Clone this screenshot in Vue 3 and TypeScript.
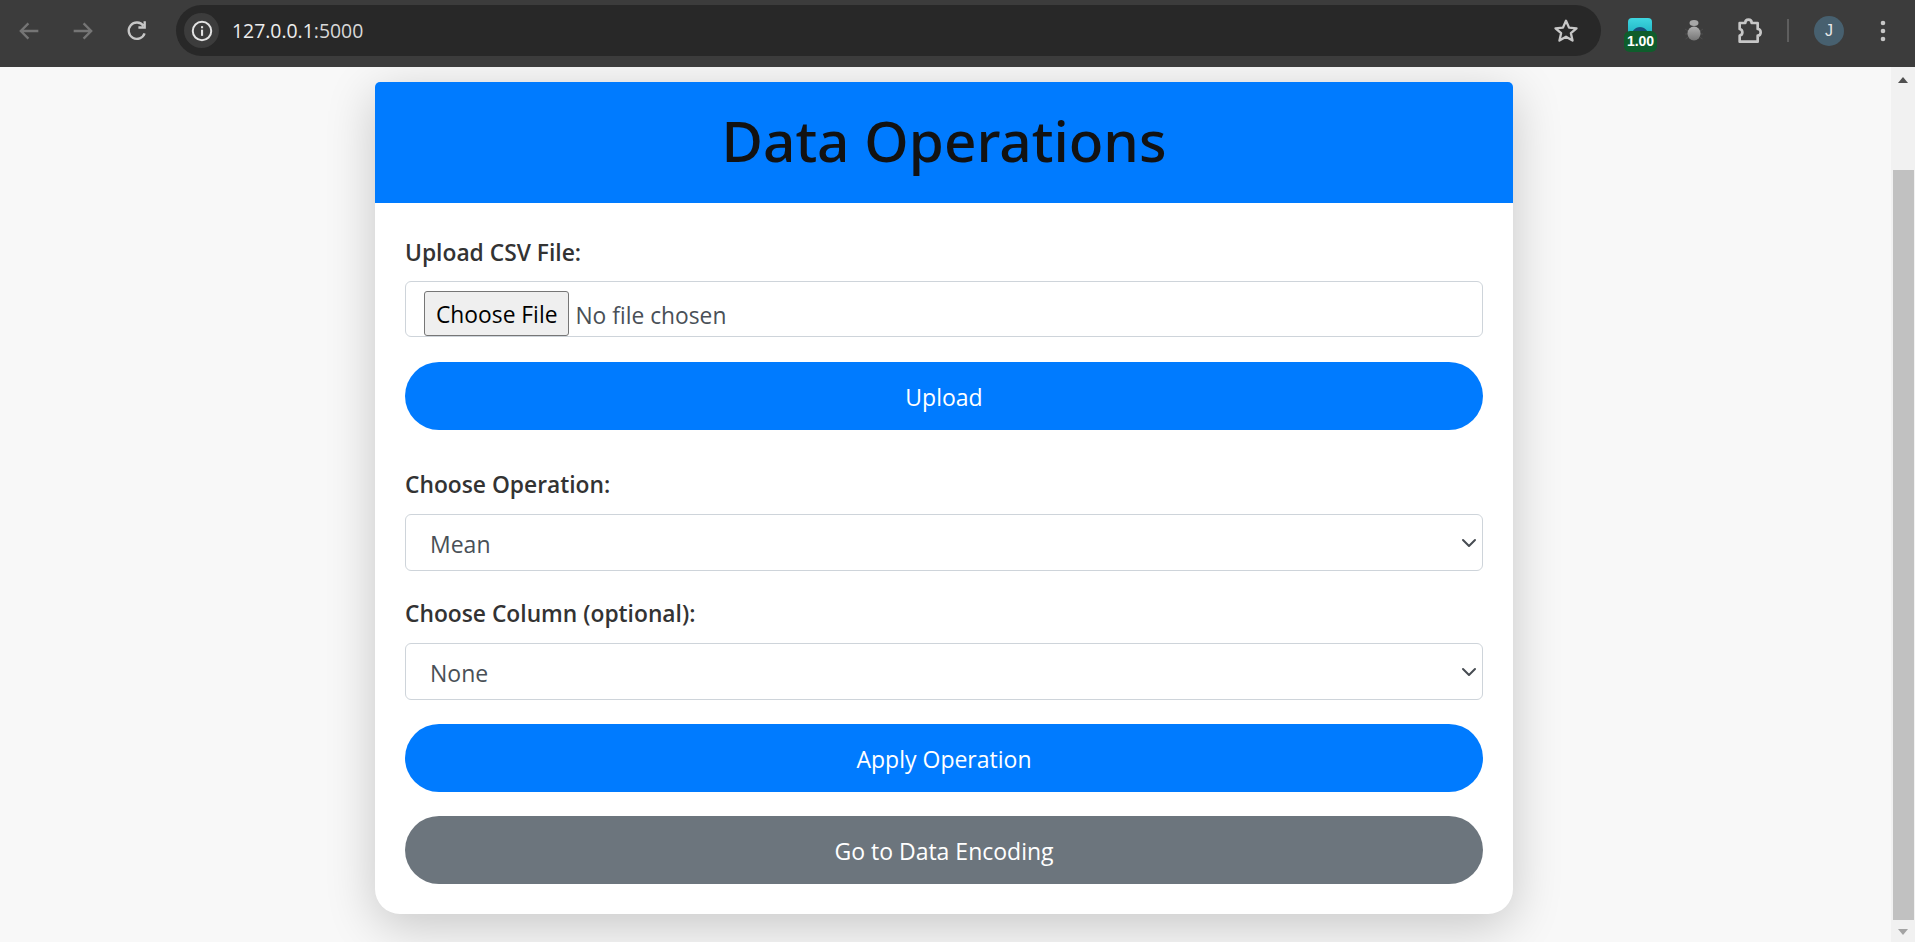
<script setup lang="ts">
const chevron = 'm2 5 6 6 6-6'
</script>

<template>
  <div class="app">
    <header class="toolbar">
      <div class="nav">
        <svg viewBox="0 0 24 24" width="28" height="28"><path d="M20 12H5M11.500 5.500 5 12l6.500 6.500" fill="none" stroke="#757575" stroke-width="2"/></svg>
        <svg viewBox="0 0 24 24" width="28" height="28"><path d="M4 12h15M12.500 5.500 19 12l-6.500 6.500" fill="none" stroke="#757575" stroke-width="2"/></svg>
        <svg viewBox="0 0 24 24" width="28" height="28"><path d="M18.500 14a7 7 0 1 1-1-6.500M18.600 3.600V9h-5.400" fill="none" stroke="#c7c7c7" stroke-width="2"/></svg>
      </div>
      <div class="omnibox">
        <span class="info">
          <svg viewBox="0 0 20 20" width="22" height="22"><circle cx="10" cy="10" r="8.400" fill="none" stroke="#e3e3e3" stroke-width="1.800"/><rect x="9.100" y="8.800" width="1.900" height="5.600" fill="#e3e3e3"/><rect x="9.100" y="5.600" width="1.900" height="1.900" fill="#e3e3e3"/></svg>
        </span>
        <span class="url">127.0.0.1<span class="port">:5000</span></span>
        <svg class="star" viewBox="0 0 24 24" width="28" height="28"><path d="m12 3.200 2.600 5.900 6.400.6-4.800 4.200 1.400 6.300-5.600-3.300-5.600 3.300 1.400-6.300L3 9.700l6.400-.6z" fill="none" stroke="#c7c7c7" stroke-width="2" stroke-linejoin="round"/></svg>
      </div>
      <div class="exts">
        <div class="ext-badge">
          <span class="ext-img"></span>
          <span class="badge">1.00</span>
        </div>
        <svg class="bug" viewBox="0 0 20 24" width="20" height="24">
          <defs><linearGradient id="bugfill" x1="0" y1="0" x2="0" y2="1"><stop offset="0" stop-color="#b0b0b0"/><stop offset="1" stop-color="#757575"/></linearGradient></defs>
          <path d="M1 10l3 2M1 15h3M1.500 20l3-2M19 10l-3 2M19 15h-3M18.500 20l-3-2" stroke="#4c4c4c" stroke-width="1" fill="none"/>
          <ellipse cx="10" cy="4" rx="4.500" ry="3" fill="#a8a8a8"/>
          <ellipse cx="10" cy="14.500" rx="6.500" ry="7" fill="url(#bugfill)"/>
        </svg>
        <svg class="puzzle" viewBox="0 0 24 24" width="32" height="32"><path d="M5 6h4.200c0-3.300 4.800-3.300 4.800 0h4.500v4.500c3 0 3 5 0 5V20H5v-4.500c2.700-.5 2.700-4.500 0-5z" fill="none" stroke="#c7c7c7" stroke-width="2" stroke-linejoin="round"/></svg>
        <span class="sep"></span>
        <span class="avatar">J</span>
        <svg class="dots" viewBox="0 0 6 24" width="6" height="24"><circle cx="3" cy="4" r="2.300" fill="#c7c7c7"/><circle cx="3" cy="12" r="2.300" fill="#c7c7c7"/><circle cx="3" cy="20" r="2.300" fill="#c7c7c7"/></svg>
      </div>
    </header>
    <div class="viewport">
      <main class="page">
        <section class="card">
          <div class="card-head"><h1>Data Operations</h1></div>
          <div class="card-body">
            <label class="lbl">Upload CSV File:</label>
            <div class="file-box">
              <span class="file-btn">Choose File</span>
              <span class="file-name">No file chosen</span>
            </div>
            <button class="btn blue upload">Upload</button>
            <label class="lbl op">Choose Operation:</label>
            <div class="sel"><span>Mean</span><svg viewBox="0 0 16 16" width="16" height="16"><path :d="chevron" fill="none" stroke="#474c52" stroke-width="2" stroke-linecap="round" stroke-linejoin="round"/></svg></div>
            <label class="lbl col">Choose Column (optional):</label>
            <div class="sel"><span>None</span><svg viewBox="0 0 16 16" width="16" height="16"><path :d="chevron" fill="none" stroke="#474c52" stroke-width="2" stroke-linecap="round" stroke-linejoin="round"/></svg></div>
            <button class="btn blue apply">Apply Operation</button>
            <button class="btn gray">Go to Data Encoding</button>
          </div>
        </section>
      </main>
      <aside class="scrollbar">
        <span class="arr up"></span>
        <span class="track"><span class="thumb"></span></span>
        <span class="arr down"></span>
      </aside>
    </div>
  </div>
</template>

<style>
html, body { margin: 0; height: 100%; overflow: hidden; }
</style>

<style scoped>
.app { height: 942px; display: flex; flex-direction: column; overflow: hidden; font-family: "Open Sans", "Noto Sans", sans-serif; }
.toolbar { height: 67px; background: #3c3c3c; display: flex; align-items: center; flex: none; box-sizing: border-box; padding: 0 17px 6px 15px; }
.nav { display: flex; gap: 26px; align-items: center; width: 161px; }
.omnibox { width: 1425px; height: 51px; border-radius: 26px; background: #282828; display: flex; align-items: center; padding: 0 21px 0 8px; box-sizing: border-box; flex: none; }
.info { width: 35px; height: 35px; border-radius: 50%; background: #3c3c3c; display: flex; align-items: center; justify-content: center; }
.url { color: #ededed; font-size: 19.4px; margin-left: 13px; flex: 1; }
.port { color: #d8d8d8; }
.exts { display: flex; align-items: center; flex: 1; padding-left: 23px; }
.ext-badge { position: relative; width: 33px; height: 34px; flex: none; margin-top: 9px; }
.ext-img { position: absolute; left: 4px; top: 0; width: 24px; height: 16px; border-radius: 4px 4px 0 0; background: radial-gradient(circle at 50% 110%, #164f7c 0 8px, transparent 9px), linear-gradient(#3fd6e0, #1fb4c4); }
.badge { position: absolute; left: 0; top: 13px; width: 33px; height: 21px; border-radius: 6px; background: #0f5d2c; color: #fff; font: 700 14px/21px "Liberation Sans", sans-serif; text-align: center; }
.bug { margin-left: 27px; flex: none; }
.puzzle { margin-left: 29px; flex: none; }
.sep { width: 2px; height: 23px; background: #5e5e5e; margin-left: 22px; flex: none; }
.avatar { width: 30px; height: 30px; border-radius: 50%; background: #47606f; color: #e8e8e8; font: 16px "Liberation Sans", sans-serif; display: flex; align-items: center; justify-content: center; margin-left: 25px; flex: none; }
.dots { margin-left: 36px; flex: none; }
.viewport { flex: 1; display: flex; min-height: 0; background: #f8f8f8; overflow: hidden; }
.page { flex: 1; min-width: 0; }
.card { width: 1138px; margin: 15px 0 0 375px; background: #fff; border-radius: 5px 5px 25px 25px; box-shadow: 0 12px 50px rgba(0,0,0,.2); }
.card-head { background: #007bff; height: 121px; border-radius: 5px 5px 0 0; display: flex; align-items: center; justify-content: center; padding-bottom: 5px; box-sizing: border-box; }
h1 { margin: 0; font-family: "Noto Sans", sans-serif; font-size: 56.7px; font-weight: 500; color: #121212; line-height: 1; }
.card-body { padding: 35px 30px 30px; display: flex; flex-direction: column; }
.lbl { font-size: 22.8px; font-weight: 600; color: #333; line-height: 30px; height: 30px; }
.file-box { margin-top: 13px; height: 56px; box-sizing: border-box; border: 1px solid #ced4da; border-radius: 6px; display: flex; align-items: flex-start; padding: 9px 0 0 18px; }
.file-btn { box-sizing: border-box; height: 45px; background: #efefef; border: 1px solid #767676; border-radius: 3px; color: #000; font-size: 22.8px; line-height: 45px; padding: 0 11px; }
.file-name { color: #495057; font-size: 22.8px; line-height: 49px; margin-left: 6px; }
.btn { border: 0; height: 68px; border-radius: 34px; color: #fff; font: inherit; font-size: 23px; width: 100%; display: block; padding: 2px 0 0; }
.blue { background: #007bff; }
.gray { background: #6c757d; margin-top: 24px; }
.upload { margin-top: 25px; }
.apply { margin-top: 24px; }
.op { margin-top: 40px; }
.col { margin-top: 28px; }
.sel { margin-top: 14px; height: 57px; box-sizing: border-box; border: 1px solid #ced4da; border-radius: 6px; display: flex; align-items: center; justify-content: space-between; padding: 0 5px 0 24px; color: #495057; font-size: 23px; }
.sel span { padding-top: 3px; }
.scrollbar { width: 24px; background: #f1f1f1; display: flex; flex-direction: column; flex: none; }
.arr { height: 25px; flex: none; position: relative; width: 100%; }
.up::after { content: ""; position: absolute; left: 7px; top: 10px; border: 5.500px solid transparent; border-top: 0; border-bottom: 6px solid #505050; }
.down { height: 22px; }
.down::after { content: ""; position: absolute; left: 7px; top: 9px; border: 5.500px solid transparent; border-bottom: 0; border-top: 6px solid #a3a3a3; }
.track { flex: 1; width: 100%; display: flex; align-items: flex-end; }
.thumb { width: 21px; height: 750px; margin-left: 2px; background: #c1c1c1; }
</style>
